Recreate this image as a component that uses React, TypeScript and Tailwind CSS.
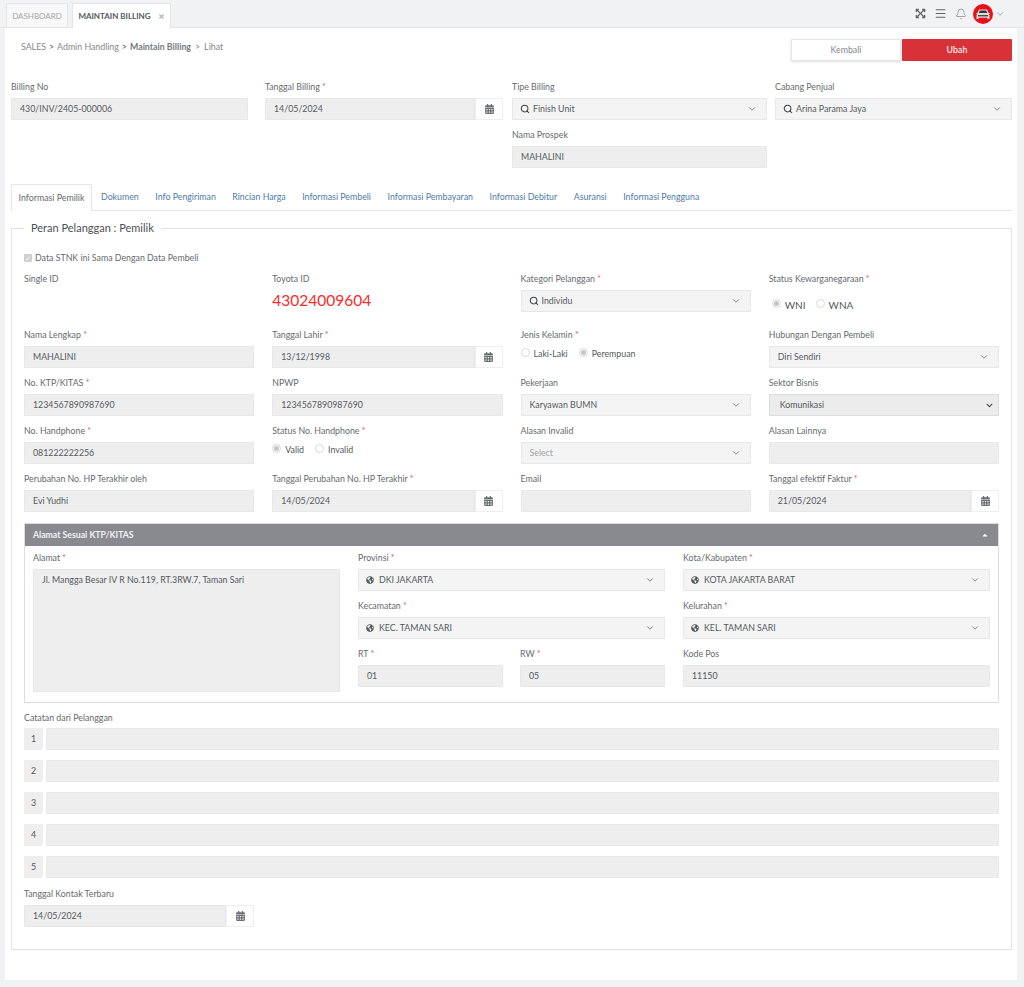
import { ReactNode } from "react"
import { Bell, ChevronDown, Menu, Search } from "lucide-react"
import { FaCalendarAlt, FaCaretUp, FaChevronDown, FaExpandArrowsAlt, FaGlobeAmericas, FaTimes } from "react-icons/fa"

const tabs = [
  "Dokumen",
  "Info Pengiriman",
  "Rincian Harga",
  "Informasi Pembeli",
  "Informasi Pembayaran",
  "Informasi Debitur",
  "Asuransi",
  "Informasi Pengguna",
]

function Label({ children, required }: { children: ReactNode; required?: boolean }) {
  return (
    <div className="h-[16px] mb-[3px] text-[8.8px] leading-[16px] text-[#666a6e] whitespace-nowrap">
      {children}
      {required && <span className="text-[#e05a5a]"> *</span>}
    </div>
  )
}

function Input({ value }: { value?: string }) {
  return (
    <div className="h-[22px] bg-[#eeeeee] border border-[#e8e8e8] px-2 text-[8.8px] leading-[20px] text-[#55595d] whitespace-nowrap">
      {value}
    </div>
  )
}

function DateInput({ value }: { value: string }) {
  return (
    <div className="flex h-[22px]">
      <div className="flex-1 bg-[#eeeeee] border border-[#e8e8e8] px-2 text-[8.8px] leading-[20px] text-[#55595d]">{value}</div>
      <div className="w-[28px] flex items-center justify-center bg-white border border-[#eeeeee]">
        <FaCalendarAlt className="w-[9px] h-[10px] text-[#6b6f73]" />
      </div>
    </div>
  )
}

function Select({ value, icon, muted }: { value: string; icon?: "search" | "globe"; muted?: boolean }) {
  return (
    <div className={`flex items-center h-[22px] bg-[#f4f4f4] border border-[#e8e8e8] pr-[9px] text-[8.8px] ${icon ? "pl-[7px]" : "pl-2"} ${muted ? "text-[#a0a3a6]" : "text-[#55595d]"}`}>
      {icon === "search" && <Search className="w-[10px] h-[10px] mr-[3px] text-[#3f4347]" strokeWidth={2.5} />}
      {icon === "globe" && <FaGlobeAmericas className="w-[8px] h-[8px] mr-[5px] text-[#55595d]" />}
      <span className="flex-1 whitespace-nowrap">{value}</span>
      <ChevronDown className="w-[10px] h-[10px] text-[#6b6f73]" strokeWidth={2} />
    </div>
  )
}

function Radio({ label, checked, className }: { label: string; checked?: boolean; className?: string }) {
  return (
    <div className={`flex items-center text-[#55595d] ${className ?? "text-[8.8px]"}`}>
      <span className="w-[9px] h-[9px] rounded-full border border-[#d8d8d8] bg-white flex items-center justify-center mr-[4px] mt-[-3px]">
        {checked && <span className="w-[5px] h-[5px] rounded-full bg-[#c4c4c4]" />}
      </span>
      {label}
    </div>
  )
}

export default function App() {
  return (
    <div className="w-[1024px] h-[987px] overflow-hidden bg-[#f1f2f3] font-['Lato',sans-serif] text-[#55595d]">
      <div className="h-[28px] flex items-end pl-[6px] pr-[19px] border-b border-[#e4e5e6]">
        <div className="h-[24px] w-[62px] mr-[4px] flex items-center justify-center bg-[#f8f8f8] border border-[#e4e5e6] border-b-0 text-[8px] text-[#a3a6a9]">
          DASHBOARD
        </div>
        <div className="h-[25px] w-[99px] mb-[-1px] flex items-center justify-center gap-[7px] bg-white border border-[#e4e5e6] border-b-0 text-[8px] font-bold text-[#55595d]">
          MAINTAIN BILLING
          <FaTimes className="w-[7px] h-[7px] text-[#b5b7b9]" />
        </div>
        <div className="self-center ml-auto flex items-center">
          <FaExpandArrowsAlt className="w-[11px] h-[11px] text-[#5f6367]" />
          <Menu className="w-[13px] h-[13px] ml-[8px] text-[#5f6367]" strokeWidth={2} />
          <Bell className="w-[12px] h-[12px] ml-[8px] text-[#8a8d90]" strokeWidth={1.5} />
          <svg viewBox="0 0 20 20" className="w-[20px] h-[20px] ml-[6px]">
            <circle cx="10" cy="10" r="10" fill="#e8101a" />
            <path d="M6 5.5h8l1.6 3.5h.9v1h-.7l.7 1v4h-2v-1.2H5.5V15h-2v-4l.7-1h-.7V9h.9z" fill="#dcdcdc" />
            <path d="M6.8 6.5h6.4l1 2.5H5.8z" fill="#3a3a3a" />
            <rect x="5" y="11" width="10" height="1.4" fill="#4a4a4a" />
          </svg>
          <ChevronDown className="w-[10px] h-[10px] ml-[2px] text-[#7a7d80]" strokeWidth={1.5} />
        </div>
      </div>

      <div className="ml-[5px] w-[1012px] h-[952px] bg-white pl-[6px] pr-[5px]">
        <div className="flex items-start h-[51px] pt-[11px]">
          <div className="flex items-center pl-[10px] h-[16px] text-[8.8px] text-[#85888b]">
            <span>SALES</span>
            <span className="mx-[3px] text-[#55595d]">&gt;</span>
            <span>Admin Handling</span>
            <span className="mx-[3px] text-[#55595d]">&gt;</span>
            <span className="font-bold text-[#777a7d]">Maintain Billing</span>
            <span className="mx-[4px]">&gt;</span>
            <span>Lihat</span>
          </div>
          <div className="ml-auto flex gap-px">
            <div className="w-[110px] h-[22px] flex items-center justify-center bg-white border border-[#e6e6e6] shadow-sm text-[8.8px] text-[#85888b]">Kembali</div>
            <div className="w-[110px] h-[22px] flex items-center justify-center bg-[#d63238] rounded-[1px] text-[8.8px] font-bold text-[#f8dcdc]">Ubah</div>
          </div>
        </div>

        <div className="flex items-start">
          <div className="w-[237px] mr-[17px]">
            <Label>Billing No</Label>
            <Input value="430/INV/2405-000006" />
          </div>
          <div className="w-[238px] mr-[9px]">
            <Label required>Tanggal Billing</Label>
            <DateInput value="14/05/2024" />
          </div>
          <div className="w-[255px] mr-[8px]">
            <Label>Tipe Billing</Label>
            <Select value="Finish Unit" icon="search" />
            <div className="mt-[7px]">
              <Label>Nama Prospek</Label>
              <Input value="MAHALINI" />
            </div>
          </div>
          <div className="w-[237px]">
            <Label>Cabang Penjual</Label>
            <Select value="Arina Parama Jaya" icon="search" />
          </div>
        </div>

        <div className="flex h-[27px] mt-[16px] border-b border-[#e4e5e6] text-[8.8px]">
          <div className="h-[27px] w-[81px] flex items-center justify-center bg-white border border-[#e4e5e6] border-b-0 rounded-t-[2px] text-[#666a6e]">
            Informasi Pemilik
          </div>
          <div className="flex items-center ml-[9px] gap-[16.5px] text-[#4f7ba6]">
            {tabs.map((t) => (
              <span key={t} className="whitespace-nowrap">{t}</span>
            ))}
          </div>
        </div>

        <fieldset className="mt-[9px] h-[730px] border border-[#e2e3e4] px-[12px]">
          <legend className="px-[7px] text-[11px] leading-[16px] text-[#4d5155]">Peran Pelanggan : Pemilik</legend>

          <div className="flex items-center mt-[15px] h-[14px] text-[8.8px] text-[#666a6e]">
            <span className="w-[8px] h-[8px] mr-[3px] bg-[#cfcfcf] rounded-[1px] flex items-center justify-center text-[7px] leading-none text-white">✓</span>
            Data STNK ini Sama Dengan Data Pembeli
          </div>

          <div className="grid grid-cols-4 gap-x-[18px] gap-y-[7px] mt-[6px]">
            <div>
              <Label>Single ID</Label>
            </div>
            <div>
              <Label>Toyota ID</Label>
              <div className="text-[15.5px] leading-[22px] mt-[-1px] text-[#fb2a2a]">43024009604</div>
            </div>
            <div className="mb-[8px]">
              <Label required>Kategori Pelanggan</Label>
              <Select value="Individu" icon="search" />
            </div>
            <div>
              <Label required>Status Kewarganegaraan</Label>
              <div className="flex h-[22px] items-center pl-[3px] mt-[7px]">
                <Radio label="WNI" checked className="text-[10px]" />
                <Radio label="WNA" className="text-[10px] ml-[10px]" />
              </div>
            </div>

            <div>
              <Label required>Nama Lengkap</Label>
              <Input value="MAHALINI" />
            </div>
            <div>
              <Label required>Tanggal Lahir</Label>
              <DateInput value="13/12/1998" />
            </div>
            <div>
              <Label required>Jenis Kelamin</Label>
              <div className="flex h-[16px] items-center mt-px">
                <Radio label="Laki-Laki" />
                <Radio label="Perempuan" checked className="text-[8.8px] ml-[11px]" />
              </div>
            </div>
            <div>
              <Label>Hubungan Dengan Pembeli</Label>
              <Select value="Diri Sendiri" />
            </div>

            <div>
              <Label required>No. KTP/KITAS</Label>
              <Input value="1234567890987690" />
            </div>
            <div>
              <Label>NPWP</Label>
              <Input value="1234567890987690" />
            </div>
            <div>
              <Label>Pekerjaan</Label>
              <Select value="Karyawan BUMN" />
            </div>
            <div>
              <Label>Sektor Bisnis</Label>
              <div className="flex items-center h-[22px] bg-[#ececec] border border-[#dcdcdc] pl-[10px] pr-[5px] text-[8.8px]">
                <span className="flex-1">Komunikasi</span>
                <FaChevronDown className="w-[7px] h-[7px] text-[#3f4347]" />
              </div>
            </div>

            <div>
              <Label required>No. Handphone</Label>
              <Input value="081222222256" />
            </div>
            <div>
              <Label required>Status No. Handphone</Label>
              <div className="flex h-[16px] items-center mt-px">
                <Radio label="Valid" checked />
                <Radio label="Invalid" className="text-[8.8px] ml-[11px]" />
              </div>
            </div>
            <div>
              <Label>Alasan Invalid</Label>
              <Select value="Select" muted />
            </div>
            <div>
              <Label>Alasan Lainnya</Label>
              <Input />
            </div>

            <div>
              <Label>Perubahan No. HP Terakhir oleh</Label>
              <Input value="Evi Yudhi" />
            </div>
            <div>
              <Label required>Tanggal Perubahan No. HP Terakhir</Label>
              <DateInput value="14/05/2024" />
            </div>
            <div>
              <Label>Email</Label>
              <Input />
            </div>
            <div>
              <Label required>Tanggal efektif Faktur</Label>
              <DateInput value="21/05/2024" />
            </div>
          </div>

          <div className="mt-[11px] h-[180px] border border-[#dcdddf]">
            <div className="flex items-center justify-between h-[22px] bg-[#888a90] pl-[8px] pr-[9px] text-[8.7px] font-bold text-[#f2f2f2]">
              Alamat Sesuai KTP/KITAS
              <FaCaretUp className="w-[8px] h-[8px] text-white" />
            </div>
            <div className="grid grid-cols-3 gap-x-[18px] pl-[8px] pr-[8px] pt-[4px]">
              <div>
                <Label required>Alamat</Label>
                <div className="h-[123px] bg-[#eeeeee] border border-[#e8e8e8] px-2 py-[2px] text-[8.8px] leading-[15px] text-[#55595d]">
                  Jl. Mangga Besar IV R No.119, RT.3RW.7, Taman Sari
                </div>
              </div>
              <div className="col-span-2 grid grid-cols-2 gap-x-[18px] gap-y-[7px] content-start">
                <div>
                  <Label required>Provinsi</Label>
                  <Select value="DKI JAKARTA" icon="globe" />
                </div>
                <div>
                  <Label required>Kota/Kabupaten</Label>
                  <Select value="KOTA JAKARTA BARAT" icon="globe" />
                </div>
                <div>
                  <Label required>Kecamatan</Label>
                  <Select value="KEC. TAMAN SARI" icon="globe" />
                </div>
                <div>
                  <Label required>Kelurahan</Label>
                  <Select value="KEL. TAMAN SARI" icon="globe" />
                </div>
                <div className="grid grid-cols-2 gap-x-[17px]">
                  <div>
                    <Label required>RT</Label>
                    <Input value="01" />
                  </div>
                  <div>
                    <Label required>RW</Label>
                    <Input value="05" />
                  </div>
                </div>
                <div>
                  <Label>Kode Pos</Label>
                  <Input value="11150" />
                </div>
              </div>
            </div>
          </div>

          <div className="mt-[7px]">
            <Label>Catatan dari Pelanggan</Label>
            <div className="flex flex-col gap-[10px] mt-[-1px]">
              {[1, 2, 3, 4, 5].map((n) => (
                <div key={n} className="flex h-[22px] gap-[3px]">
                  <div className="w-[19px] flex items-center justify-center bg-[#eeeeee] text-[8.8px] text-[#55595d]">{n}</div>
                  <div className="flex-1 bg-[#eeeeee] border border-[#e8e8e8]" />
                </div>
              ))}
            </div>
          </div>

          <div className="w-[230px] mt-[8px]">
            <Label>Tanggal Kontak Terbaru</Label>
            <DateInput value="14/05/2024" />
          </div>
        </fieldset>
      </div>
    </div>
  )
}
